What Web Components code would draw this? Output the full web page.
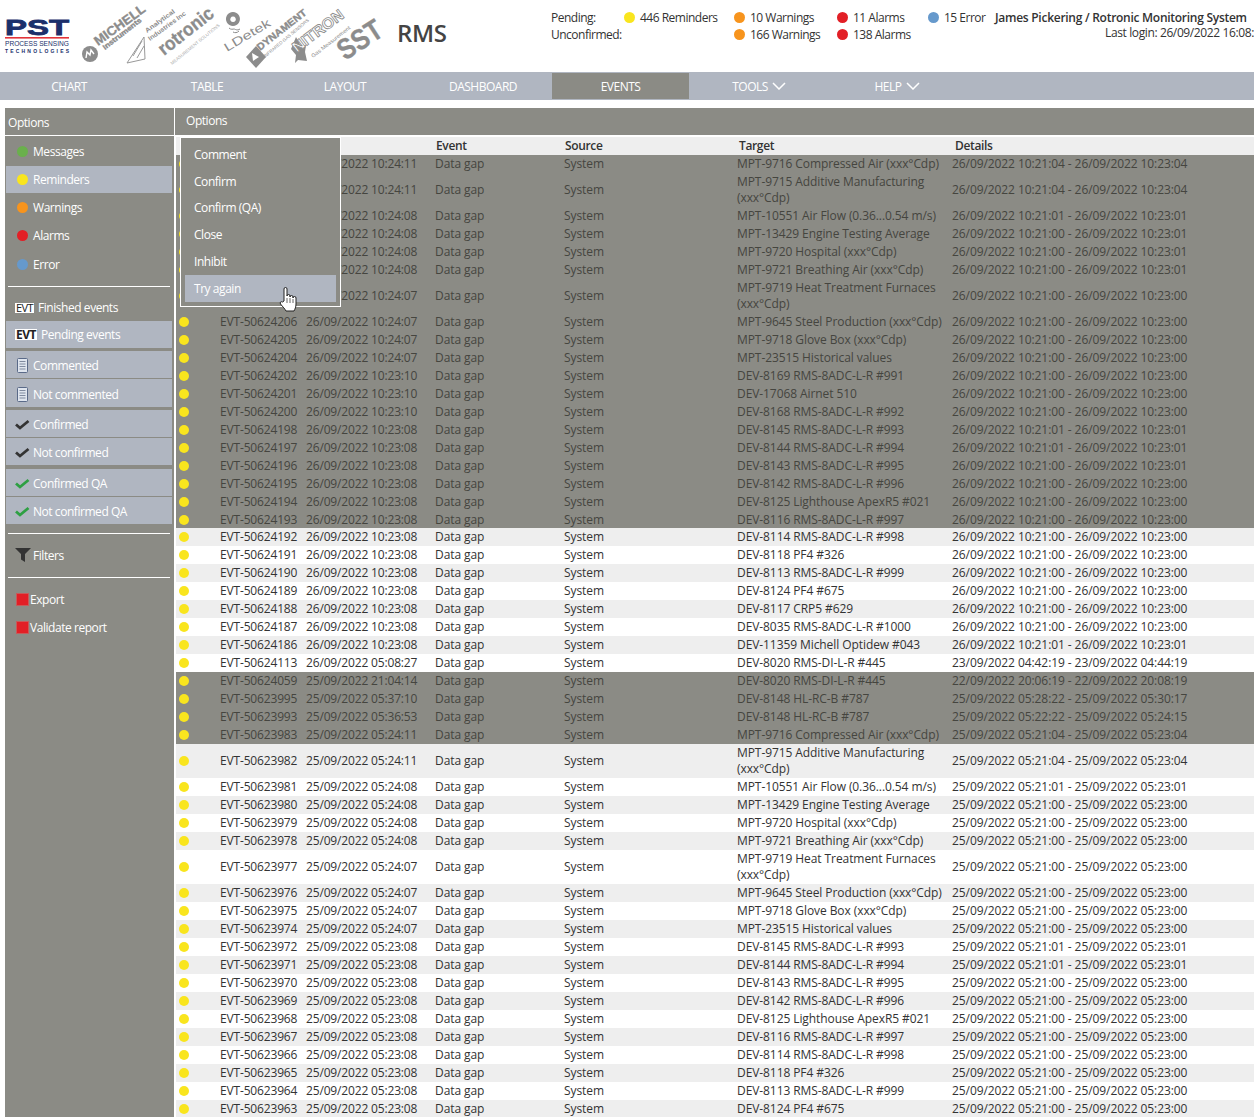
<!DOCTYPE html>
<html>
<head>
<meta charset="utf-8">
<title>RMS</title>
<style>
  html, body { margin: 0; padding: 0; height: 100%; overflow: hidden; background: #fff; }
  body { font: 12px "Open Sans", "Liberation Sans", sans-serif; color: #333; }
</style>
</head>
<body>
<rms-app></rms-app>

<script>
const FONT = '"Open Sans", "Liberation Sans", sans-serif';

class BrandStrip extends HTMLElement {
  constructor() {
    super();
    const shadow = this.attachShadow({ mode: "open" });
    shadow.innerHTML = `
      <style>
        :host { display: block; width: 395px; height: 72px; flex: none; letter-spacing: 0; }
        svg { display: block; }
        text { font-family: "Liberation Sans", sans-serif; fill: #8c8c8c; }
        .b { font-weight: 700; stroke: #8c8c8c; stroke-width: .35; }
        .o { fill: #fff; stroke: #8c8c8c; stroke-width: .8; font-weight: 700; }
        .pst { fill: #1b2f6b; font-weight: 700; }
      </style>
      <svg width="395" height="72" viewBox="0 0 395 72">
        <text class="pst" x="5" y="35" font-size="22" textLength="64" lengthAdjust="spacingAndGlyphs" stroke="#1b2f6b" stroke-width=".8">PST</text>
        <rect x="5" y="37" width="64" height="1.6" fill="#e2343a"/>
        <text x="5" y="46" font-size="7" textLength="64" lengthAdjust="spacingAndGlyphs" style="fill:#1b2f6b">PROCESS SENSING</text>
        <text class="pst" x="5" y="53" font-size="5" textLength="64">TECHNOLOGIES</text>

        <circle cx="90" cy="54" r="8" fill="#8c8c8c"/>
        <path d="M86 58l1-6 3 3 1-5 3 4" fill="none" stroke="#fff" stroke-width="1.4"/>
        <text class="b" transform="translate(98,46) rotate(-36)" font-size="13" textLength="60" lengthAdjust="spacingAndGlyphs">MICHELL</text>
        <text class="b" transform="translate(105,50) rotate(-38)" font-size="7" textLength="47" lengthAdjust="spacingAndGlyphs">Instruments</text>

        <path d="M127 63l17-26 1 22zM133 56l9-15M137 58l7-12" fill="none" stroke="#999" stroke-width="1"/>
        <text transform="translate(147,33) rotate(-36)" font-size="6.500" font-weight="700" textLength="35" lengthAdjust="spacingAndGlyphs">Analytical</text>
        <text transform="translate(150,41) rotate(-36)" font-size="6.500" font-weight="700" textLength="45" lengthAdjust="spacingAndGlyphs">Industries Inc</text>

        <text class="b" transform="translate(164,56) rotate(-38)" font-size="19" textLength="65" lengthAdjust="spacingAndGlyphs">rotronic</text>
        <text transform="translate(172,65) rotate(-39)" font-size="4.500" textLength="62" lengthAdjust="spacingAndGlyphs" style="fill:#aaa">MEASUREMENT SOLUTIONS</text>

        <path d="M233 12a7 7 0 1 1-.1 0zM233 16.500a2.800 2.800 0 1 0 .1 0z" fill="#8c8c8c" fill-rule="evenodd"/>
        <path d="M229 28c2 2 4 1 5 1s3 2 6 0M233 32c2 1 4 1 6-1" fill="none" stroke="#8c8c8c"/>
        <text transform="translate(227,52) rotate(-31)" font-size="12" textLength="52" lengthAdjust="spacingAndGlyphs">LDetek</text>

        <path d="M256 46l10 11-10 11-10-11z" fill="#8c8c8c"/>
        <path d="M252 53l7 4-6 4z" fill="#fff"/>
        <text class="b" transform="translate(260,51) rotate(-38)" font-size="10" textLength="60" lengthAdjust="spacingAndGlyphs">DYNAMENT</text>
        <text transform="translate(265,58) rotate(-40)" font-size="4.500" textLength="58" lengthAdjust="spacingAndGlyphs">INFRARED GAS SENSORS</text>

        <path d="M296 37l5 9 5-1-1 7 2 9-9-1-3 3 1-8-5-6z" fill="#8c8c8c"/>
        <text class="o" transform="translate(297,53) rotate(-37)" font-size="15" textLength="60" lengthAdjust="spacingAndGlyphs">NITRON</text>
        <text transform="translate(313,58) rotate(-38)" font-size="5.500" textLength="48" lengthAdjust="spacingAndGlyphs">Gas Measurement</text>

        <text class="b" transform="translate(345,61) rotate(-33)" font-size="29" textLength="48" lengthAdjust="spacingAndGlyphs">SST</text>
      </svg>`;
  }
}
customElements.define("brand-strip", BrandStrip);

class StatusDot extends HTMLElement {
  constructor() {
    super();
    const shadow = this.attachShadow({ mode: "open" });
    shadow.innerHTML = `
      <style>
        :host { display: inline-flex; align-items: center; gap: var(--dot-gap, 5px); white-space: nowrap; }
        i { width: var(--dot-size, 11px); height: var(--dot-size, 11px); border-radius: 50%; background: var(--dot, #f9e51e); flex: none; }
      </style>
      <i></i><slot></slot>`;
  }
}
customElements.define("status-dot", StatusDot);

class TopBar extends HTMLElement {
  constructor() {
    super();
    const shadow = this.attachShadow({ mode: "open" });
    shadow.innerHTML = `
      <style>
        :host { display: flex; height: 72px; flex: none; overflow: hidden; background: #fff; color: #333; font: 12px ${FONT}; letter-spacing: -.5px; }
        .rms { width: 156px; flex: none; box-sizing: border-box; padding: 0 0 8px 2px; display: flex; align-items: center; font-size: 24px; font-weight: 600; color: #444; letter-spacing: -.4px; }
        .status {
          width: 444px; flex: none; display: grid; align-content: start; padding-top: 9px;
          grid-template-columns: 73px 110px 103px 91px 1fr; grid-auto-rows: 17px; align-items: center;
          --dot-gap: 5px;
        }
        .user { flex: none; width: 259px; padding-top: 9px; white-space: nowrap; }
        .user b { display: block; font-weight: 600; line-height: 17px; letter-spacing: -.27px; }
        .user span { display: block; line-height: 14px; padding-left: 110px; letter-spacing: -.38px; }
        .y { --dot: #f9e51e; } .o { --dot: #f7941d; } .r { --dot: #e21f26; } .b { --dot: #6699cc; }
      </style>
      <brand-strip></brand-strip>
      <div class="rms">RMS</div>
      <div class="status">
        <span>Pending:</span>
        <status-dot class="y">446 Reminders</status-dot>
        <status-dot class="o">10 Warnings</status-dot>
        <status-dot class="r">11 Alarms</status-dot>
        <status-dot class="b">15 Error</status-dot>
        <span>Unconfirmed:</span>
        <span></span>
        <status-dot class="o">166 Warnings</status-dot>
        <status-dot class="r">138 Alarms</status-dot>
      </div>
      <div class="user">
        <b>James Pickering / Rotronic Monitoring System</b>
        <span>Last login: 26/09/2022 16:08:</span>
      </div>`;
  }
}
customElements.define("top-bar", TopBar);

class MainNav extends HTMLElement {
  constructor() {
    super();
    const shadow = this.attachShadow({ mode: "open" });
    const chevron = `<svg width="14" height="8" viewBox="0 0 14 8"><path d="M1 1l6 6 6-6" fill="none" stroke="#fff" stroke-width="1.5"/></svg>`;
    shadow.innerHTML = `
      <style>
        :host { display: grid; grid-template-columns: repeat(7, 138px); height: 28px; flex: none; background: #b0b6c1; color: #fff; font: 12px ${FONT}; letter-spacing: -.5px; }
        a { display: flex; align-items: center; justify-content: center; gap: 4px; }
        a.on { background: #8b8b85; margin: 1px 1px 1px 0; }
      </style>
      <a>CHART</a><a>TABLE</a><a>LAYOUT</a><a>DASHBOARD</a><a class="on">EVENTS</a>
      <a>TOOLS ${chevron}</a><a>HELP ${chevron}</a>`;
  }
}
customElements.define("main-nav", MainNav);

class SideItem extends HTMLElement {
  constructor() {
    super();
    const shadow = this.attachShadow({ mode: "open" });
    shadow.innerHTML = `
      <style>
        :host { display: flex; align-items: center; height: 28px; box-sizing: border-box; padding-left: 9px; color: #fff; }
        :host([on]) { background: #b0b6c1; }
        .ic { width: var(--ic, 18px); flex: none; display: flex; align-items: center; }
      </style>
      <span class="ic"><slot name="icon"></slot></span><slot></slot>`;
  }
}
customElements.define("side-item", SideItem);

const ICONS = {
  note: `<svg slot="icon" width="11" height="15" viewBox="0 0 11 15" style="margin-left:2px"><rect x=".5" y=".5" width="10" height="14" rx="1" fill="#dfe5ee" stroke="#5a6a88"/><path d="M2.500 3.500h6M2.500 6h6M2.500 8.500h6M2.500 11h6" stroke="#7f8a9e"/></svg>`,
  check: `<svg slot="icon" width="15" height="11" viewBox="0 0 15 11"><path d="M1 5.500l4 3.500 8.500-7" fill="none" stroke="#333" stroke-width="2.800"/></svg>`,
  checkQa: `<svg slot="icon" width="15" height="11" viewBox="0 0 15 11"><path d="M1 5.500l4 3.500 8.500-7" fill="none" stroke="#2ea043" stroke-width="2.800"/></svg>`,
  funnel: `<svg slot="icon" width="16" height="14" viewBox="0 0 16 14"><path d="M0 0h16l-6 6v8l-4-2.500V6z" fill="#333"/></svg>`,
  red: `<svg slot="icon" width="13" height="13" viewBox="0 0 13 13"><rect x=".5" y=".5" width="12" height="12" fill="#e21f26" stroke="#c85a5a"/></svg>`
};

const dot = (c) => `<svg slot="icon" width="11" height="11" viewBox="0 0 11 11" style="margin-left:2px"><circle cx="5.500" cy="5.500" r="5.500" fill="${c}"/></svg>`;

class SideBar extends HTMLElement {
  constructor() {
    super();
    const shadow = this.attachShadow({ mode: "open" });
    shadow.innerHTML = `
      <style>
        :host { display: flex; flex-direction: column; width: 169px; flex: none; background: #8b8b85; color: #fff; font: 12px ${FONT}; letter-spacing: -.45px; }
        .title { height: 27px; flex: none; box-sizing: border-box; padding: 1px 0 0 3px; display: flex; align-items: center; }
        .rule { height: 1px; flex: none; background: #fff; }
        .list { display: flex; flex-direction: column; padding: 1px 2px 0 1px; }
        hr { border: 0; height: 1px; background: #fff; margin: 0 2px; flex: none; }
        .evt { display: flex; align-items: center; justify-content: center; background: #fff; color: #222; }
        .thin { width: 19px; height: 10px; font-size: 11px; letter-spacing: -.5px; }
        .fat { width: 22px; height: 11px; font-size: 12px; font-weight: 700; letter-spacing: -.5px; }
        .s27 { height: 27px; }
        .low { padding-top: 2px; }
        .t3 { margin-top: 3px; }
        .t1 { margin-top: 1px; }
        .t4 { margin-top: 4px; }
        .rep { padding-left: 10px; --ic: 14px; }
      </style>
      <div class="title">Options</div>
      <div class="rule"></div>
      <div class="list">
        <side-item>${dot("#6ab04c")}Messages</side-item>
        <side-item class="s27 t1" on>${dot("#f9e51e")}Reminders</side-item>
        <side-item>${dot("#f7941d")}Warnings</side-item>
        <side-item>${dot("#e21f26")}Alarms</side-item>
        <side-item class="t1">${dot("#6699cc")}Error</side-item>
        <hr style="margin-top:8px">
        <side-item style="height:27px;margin-top:7px;--ic:23px"><span slot="icon" class="evt thin">EVT</span>Finished events</side-item>
        <side-item class="s27" style="--ic:26px" on><span slot="icon" class="evt fat">EVT</span>Pending events</side-item>
        <side-item class="s27 t3 low" on>${ICONS.note}Commented</side-item>
        <side-item class="t1 low" on>${ICONS.note}Not commented</side-item>
        <side-item class="s27 t3 low" on>${ICONS.check}Confirmed</side-item>
        <side-item class="s27 t1 low" on>${ICONS.check}Not confirmed</side-item>
        <side-item class="s27 t4 low" on>${ICONS.checkQa}Confirmed QA</side-item>
        <side-item class="s27 t1 low" on>${ICONS.checkQa}Not confirmed QA</side-item>
        <hr style="margin-top:9px">
        <side-item style="margin-top:7px">${ICONS.funnel}Filters</side-item>
        <hr style="margin-top:8px">
        <side-item class="rep" style="margin-top:7px">${ICONS.red}Export</side-item>
        <side-item class="rep">${ICONS.red}Validate report</side-item>
      </div>`;
  }
}
customElements.define("side-bar", SideBar);

class ActionMenu extends HTMLElement {
  constructor() {
    super();
    const shadow = this.attachShadow({ mode: "open" });
    shadow.innerHTML = `
      <style>
        :host { position: absolute; left: 5px; top: 29px; width: 161px; height: 170px; box-sizing: border-box; border: 1px solid #fff; background: #8b8b85; color: #fff; padding: 3px 4px 0; font: 12px ${FONT}; letter-spacing: -.45px; z-index: 5; }
        div { height: 26.800px; box-sizing: border-box; padding-left: 9px; display: flex; align-items: center; }
        div.on { background: #b0b6c1; }
        svg { position: absolute; left: 98px; top: 149px; }
      </style>
      <div>Comment</div><div>Confirm</div><div>Confirm (QA)</div><div>Close</div><div>Inhibit</div><div class="on">Try again</div>
      <svg width="18" height="25" viewBox="0 0 18 25"><path d="M5 14V2a1.500 1.500 0 0 1 3 0V9a1.500 1.500 0 0 1 3 0v1a1.500 1.500 0 0 1 3 0v1a1.500 1.500 0 0 1 3 0v6c0 3-1 5-2 7H7c-1-2-3-4-5.500-7-1-1.500.5-3 2-2z" fill="#fff" stroke="#222" stroke-width="1"/><path d="M8 11v5M11 11v5M14 12v4" stroke="#222" stroke-width=".7"/></svg>`;
  }
}
customElements.define("action-menu", ActionMenu);

class EvtRow extends HTMLElement {
  constructor() {
    super();
    this.attachShadow({ mode: "open" });
  }
  connectedCallback() {
    const a = (n) => this.getAttribute(n) || "";
    this.shadowRoot.innerHTML = `
      <style>
        :host {
          display: grid; grid-template-columns: 44px 86px 129px 129px 173px 215px 1fr;
          align-items: center; min-height: 18px; box-sizing: border-box;
          background: #fff; color: #333; font: 12px/16px ${FONT}; letter-spacing: -.08px; white-space: nowrap;
        }
        :host([stripe]) { background: #eee; }
        :host([sel]) { background: #8b8b85; color: #45453f; }
        :host([short]) { min-height: 17px; height: 17px; }
        :host([short]) .t { padding: 0 6px 0 0; }
        .d { width: 10px; height: 10px; border-radius: 50%; background: #f9e51e; margin-left: 3px; }
        .c { letter-spacing: -.16px; }
        .t { white-space: normal; padding: 1px 6px 1px 0; }
      </style>
      <div class="d"></div><div class="c">${a("evt")}</div><div class="c">${a("time")}</div><div>Data gap</div><div>System</div>
      <div class="t">${a("target")}</div><div>${a("details")}</div>`;
  }
}
customElements.define("evt-row", EvtRow);

const D26 = "26/09/2022 ", D25 = "25/09/2022 ";
const span = (d, a, b) => `${d}${a} - ${d}${b}`;
const A = "MPT-9716 Compressed Air (xxx°Cdp)", AM = "MPT-9715 Additive Manufacturing (xxx°Cdp)",
  FL = "MPT-10551 Air Flow (0.36...0.54 m/s)", ET = "MPT-13429 Engine Testing Average",
  HO = "MPT-9720 Hospital (xxx°Cdp)", BR = "MPT-9721 Breathing Air (xxx°Cdp)",
  HT = "MPT-9719 Heat Treatment Furnaces (xxx°Cdp)", ST = "MPT-9645 Steel Production (xxx°Cdp)",
  GB = "MPT-9718 Glove Box (xxx°Cdp)", HV = "MPT-23515 Historical values",
  rms = (n, s) => `DEV-${n} RMS-8ADC-L-R #${s}`;

const ROWS = [
  ["", D26 + "10:24:11", A, span(D26, "10:21:04", "10:23:04"), 1],
  ["", D26 + "10:24:11", AM, span(D26, "10:21:04", "10:23:04"), 1],
  ["", D26 + "10:24:08", FL, span(D26, "10:21:01", "10:23:01"), 1],
  ["", D26 + "10:24:08", ET, span(D26, "10:21:00", "10:23:01"), 1],
  ["", D26 + "10:24:08", HO, span(D26, "10:21:00", "10:23:01"), 1],
  ["", D26 + "10:24:08", BR, span(D26, "10:21:00", "10:23:01"), 1],
  ["", D26 + "10:24:07", HT, span(D26, "10:21:00", "10:23:00"), 1],
  ["50624206", D26 + "10:24:07", ST, span(D26, "10:21:00", "10:23:00"), 1],
  ["50624205", D26 + "10:24:07", GB, span(D26, "10:21:00", "10:23:00"), 1],
  ["50624204", D26 + "10:24:07", HV, span(D26, "10:21:00", "10:23:00"), 1],
  ["50624202", D26 + "10:23:10", rms(8169, 991), span(D26, "10:21:00", "10:23:00"), 1],
  ["50624201", D26 + "10:23:10", "DEV-17068 Airnet 510", span(D26, "10:21:00", "10:23:00"), 1],
  ["50624200", D26 + "10:23:10", rms(8168, 992), span(D26, "10:21:00", "10:23:00"), 1],
  ["50624198", D26 + "10:23:08", rms(8145, 993), span(D26, "10:21:01", "10:23:01"), 1],
  ["50624197", D26 + "10:23:08", rms(8144, 994), span(D26, "10:21:01", "10:23:01"), 1],
  ["50624196", D26 + "10:23:08", rms(8143, 995), span(D26, "10:21:00", "10:23:01"), 1],
  ["50624195", D26 + "10:23:08", rms(8142, 996), span(D26, "10:21:00", "10:23:00"), 1],
  ["50624194", D26 + "10:23:08", "DEV-8125 Lighthouse ApexR5 #021", span(D26, "10:21:00", "10:23:00"), 1],
  ["50624193", D26 + "10:23:08", rms(8116, 997), span(D26, "10:21:00", "10:23:00"), 2],
  ["50624192", D26 + "10:23:08", rms(8114, 998), span(D26, "10:21:00", "10:23:00")],
  ["50624191", D26 + "10:23:08", "DEV-8118 PF4 #326", span(D26, "10:21:00", "10:23:00")],
  ["50624190", D26 + "10:23:08", rms(8113, 999), span(D26, "10:21:00", "10:23:00")],
  ["50624189", D26 + "10:23:08", "DEV-8124 PF4 #675", span(D26, "10:21:00", "10:23:00")],
  ["50624188", D26 + "10:23:08", "DEV-8117 CRP5 #629", span(D26, "10:21:00", "10:23:00")],
  ["50624187", D26 + "10:23:08", rms(8035, 1000), span(D26, "10:21:00", "10:23:00")],
  ["50624186", D26 + "10:23:08", "DEV-11359 Michell Optidew #043", span(D26, "10:21:01", "10:23:01")],
  ["50624113", D26 + "05:08:27", "DEV-8020 RMS-DI-L-R #445", "23/09/2022 04:42:19 - 23/09/2022 04:44:19"],
  ["50624059", D25 + "21:04:14", "DEV-8020 RMS-DI-L-R #445", "22/09/2022 20:06:19 - 22/09/2022 20:08:19", 1],
  ["50623995", D25 + "05:37:10", "DEV-8148 HL-RC-B #787", span(D25, "05:28:22", "05:30:17"), 1],
  ["50623993", D25 + "05:36:53", "DEV-8148 HL-RC-B #787", span(D25, "05:22:22", "05:24:15"), 1],
  ["50623983", D25 + "05:24:11", A, span(D25, "05:21:04", "05:23:04"), 1],
  ["50623982", D25 + "05:24:11", AM, span(D25, "05:21:04", "05:23:04")],
  ["50623981", D25 + "05:24:08", FL, span(D25, "05:21:01", "05:23:01")],
  ["50623980", D25 + "05:24:08", ET, span(D25, "05:21:00", "05:23:00")],
  ["50623979", D25 + "05:24:08", HO, span(D25, "05:21:00", "05:23:00")],
  ["50623978", D25 + "05:24:08", BR, span(D25, "05:21:00", "05:23:00")],
  ["50623977", D25 + "05:24:07", HT, span(D25, "05:21:00", "05:23:00")],
  ["50623976", D25 + "05:24:07", ST, span(D25, "05:21:00", "05:23:00")],
  ["50623975", D25 + "05:24:07", GB, span(D25, "05:21:00", "05:23:00")],
  ["50623974", D25 + "05:24:07", HV, span(D25, "05:21:00", "05:23:00")],
  ["50623972", D25 + "05:23:08", rms(8145, 993), span(D25, "05:21:01", "05:23:01")],
  ["50623971", D25 + "05:23:08", rms(8144, 994), span(D25, "05:21:01", "05:23:01")],
  ["50623970", D25 + "05:23:08", rms(8143, 995), span(D25, "05:21:00", "05:23:00")],
  ["50623969", D25 + "05:23:08", rms(8142, 996), span(D25, "05:21:00", "05:23:00")],
  ["50623968", D25 + "05:23:08", "DEV-8125 Lighthouse ApexR5 #021", span(D25, "05:21:00", "05:23:00")],
  ["50623967", D25 + "05:23:08", rms(8116, 997), span(D25, "05:21:00", "05:23:00")],
  ["50623966", D25 + "05:23:08", rms(8114, 998), span(D25, "05:21:00", "05:23:00")],
  ["50623965", D25 + "05:23:08", "DEV-8118 PF4 #326", span(D25, "05:21:00", "05:23:00")],
  ["50623964", D25 + "05:23:08", rms(8113, 999), span(D25, "05:21:00", "05:23:00")],
  ["50623963", D25 + "05:23:08", "DEV-8124 PF4 #675", span(D25, "05:21:00", "05:23:00")]
];

class EvtTable extends HTMLElement {
  constructor() {
    super();
    const shadow = this.attachShadow({ mode: "open" });
    shadow.innerHTML = `
      <style>
        :host { display: block; margin: 2px 0 0 1px; background: #fff; }
        .head {
          display: grid; grid-template-columns: 260px 129px 174px 216px 1fr; height: 18px; box-sizing: border-box; padding-bottom: 2px; align-items: center;
          background: #eee; color: #333; font: 600 12px ${FONT}; letter-spacing: -.35px;
        }
      </style>
      <div class="head"><span></span><span>Event</span><span>Source</span><span>Target</span><span>Details</span></div>`;
    ROWS.forEach((r, i) => {
      const row = document.createElement("evt-row");
      row.setAttribute("evt", r[0] ? "EVT-" + r[0] : "");
      row.setAttribute("time", r[1]);
      row.setAttribute("target", r[2]);
      row.setAttribute("details", r[3]);
      if (r[4]) row.setAttribute("sel", "");
      if (r[4] === 2) row.setAttribute("short", "");
      if (i % 2 === 1) row.setAttribute("stripe", "");
      shadow.appendChild(row);
    });
  }
}
customElements.define("evt-table", EvtTable);

class EventsPane extends HTMLElement {
  constructor() {
    super();
    const shadow = this.attachShadow({ mode: "open" });
    shadow.innerHTML = `
      <style>
        :host { display: block; flex: 1; min-width: 0; position: relative; overflow: hidden; margin-left: 1px; font: 12px ${FONT}; }
        .title { height: 27px; box-sizing: border-box; padding: 0 0 2px 11px; display: flex; align-items: center; background: #8b8b85; color: #fff; letter-spacing: -.45px; }
      </style>
      <div class="title">Options</div>
      <evt-table></evt-table>
      <action-menu></action-menu>`;
  }
}
customElements.define("events-pane", EventsPane);

class RmsApp extends HTMLElement {
  constructor() {
    super();
    const shadow = this.attachShadow({ mode: "open" });
    shadow.innerHTML = `
      <style>
        :host { display: flex; flex-direction: column; height: 100vh; overflow: hidden; }
        .body { flex: 1; min-height: 0; display: flex; padding: 8px 0 0 5px; }
      </style>
      <top-bar></top-bar>
      <main-nav></main-nav>
      <div class="body"><side-bar></side-bar><events-pane></events-pane></div>`;
  }
}
customElements.define("rms-app", RmsApp);
</script>
</body>
</html>
